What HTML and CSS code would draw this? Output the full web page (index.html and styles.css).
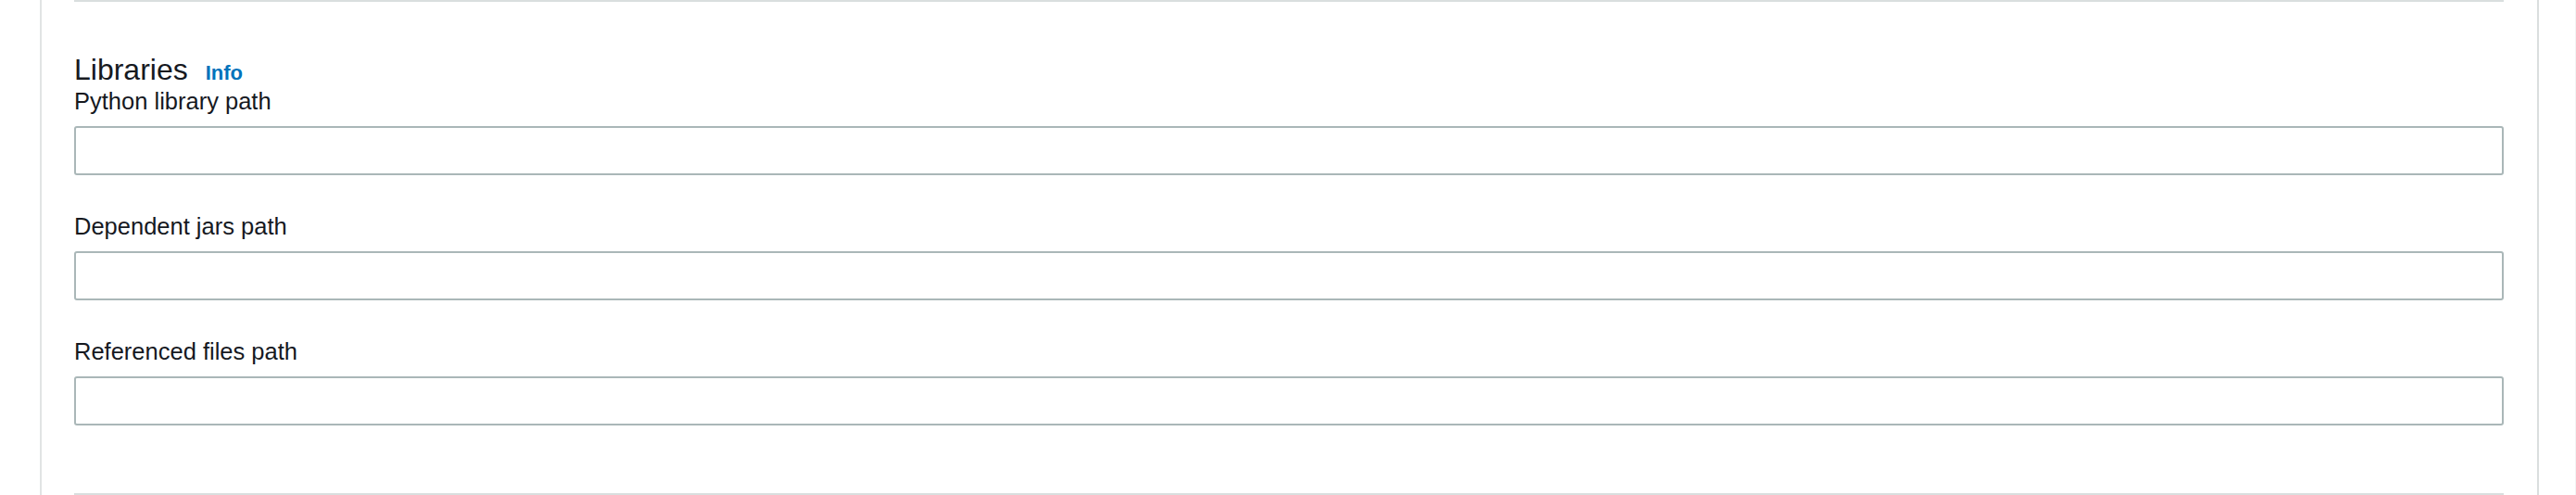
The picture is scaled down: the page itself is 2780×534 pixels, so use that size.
FILE: index.html
```html
<!DOCTYPE html>
<html lang="en">
<head>
<meta charset="utf-8">
<title>Libraries</title>
<link rel="stylesheet" href="styles.css">
</head>
<body>
<div class="page">
  <div class="panel">
    <div class="separator"></div>
    <section class="section">
      <h2 class="heading">Libraries <a class="info" href="#">Info</a></h2>
      <div class="field">
        <label class="label" for="py">Python library path</label>
        <input class="input" id="py" type="text">
      </div>
      <div class="field">
        <label class="label" for="jars">Dependent jars path</label>
        <input class="input" id="jars" type="text">
      </div>
      <div class="field">
        <label class="label" for="files">Referenced files path</label>
        <input class="input" id="files" type="text">
      </div>
    </section>
    <div class="separator"></div>
  </div>
</div>
</body>
</html>
```

FILE: styles.css
```css
html, body {
  margin: 0;
  padding: 0;
  background: #ffffff;
}

body {
  width: 2780px;
  height: 534px;
  overflow: hidden;
  font-family: "Liberation Sans", Arial, sans-serif;
  color: #16191f;
}

.page {
  display: flex;
  height: 534px;
  box-sizing: border-box;
  padding-left: 43px;
  border-right: 1px solid #f2f3f3;
}

.panel {
  width: 2697px;
  box-sizing: border-box;
  border-left: 2px solid #e1e4e4;
  border-right: 2px solid #dadede;
  padding: 0 36px 0 35px;
  display: flex;
  flex-direction: column;
}

.separator {
  height: 2px;
  background: #d9dede;
  flex: none;
}

.section {
  flex: 1;
  padding-top: 59px;
  display: flex;
  flex-direction: column;
}

.heading {
  margin: 0;
  font-size: 32px;
  font-weight: 400;
  line-height: 28px;
  display: flex;
  align-items: baseline;
  gap: 19px;
}

.info {
  font-size: 22px;
  font-weight: 700;
  color: #0073bb;
  text-decoration: none;
}

.field {
  display: flex;
  flex-direction: column;
  margin-bottom: 39px;
}

.label {
  font-size: 25.5px;
  line-height: 32px;
  margin-bottom: 11px;
}

.input {
  height: 53px;
  box-sizing: border-box;
  border: 2px solid #aab7b8;
  border-radius: 3px;
  background: #ffffff;
  margin: 0;
  padding: 0 16px;
  font: inherit;
}
```
